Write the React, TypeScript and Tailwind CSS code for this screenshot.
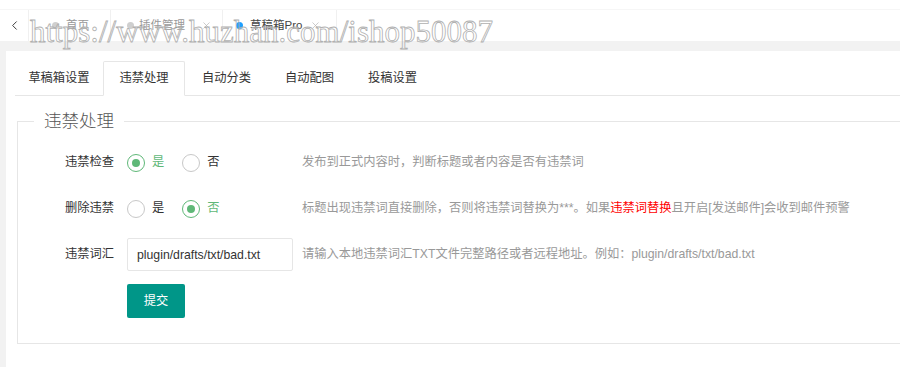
import { ChevronLeft, X } from "lucide-react";

const font = { fontFamily: '"Liberation Sans", "Noto Sans CJK SC", sans-serif' };

function PageTab({
  label,
  dot,
  active,
  width,
  pad,
  gap,
  closeGap,
}: {
  label: string;
  dot: string;
  active?: boolean;
  width: string;
  pad: string;
  gap: string;
  closeGap?: string;
}) {
  return (
    <div className={`flex h-full shrink-0 items-center border-r border-[#f0f0f0] ${width} ${pad}`}>
      <span className={`h-[7px] w-[7px] rounded-full ${dot} ${gap}`} />
      <span className={active ? "text-[#444]" : "text-[#999]"}>{label}</span>
      {closeGap ? <X size={11} strokeWidth={1.5} className={`text-[#b5b5b5] ${closeGap}`} /> : null}
    </div>
  );
}

function Radio({ checked, label }: { checked?: boolean; label: string }) {
  return (
    <div className="mr-[18px] flex items-center">
      <span
        className={`grid h-[18px] w-[18px] place-items-center rounded-full border-[1.5px] ${
          checked ? "border-[#5FB878]" : "border-[#c8c8c8]"
        }`}
      >
        {checked ? <span className="h-[8px] w-[8px] rounded-full bg-[#5FB878]" /> : null}
      </span>
      <span className={`ml-[7px] ${checked ? "text-[#5FB878]" : "text-[#333]"}`}>{label}</span>
    </div>
  );
}

function Row({ label, children, help }: { label: string; children: React.ReactNode; help?: React.ReactNode }) {
  return (
    <div className="flex h-[33px] items-center">
      <div className="w-[109px] pr-[13px] text-right text-[#333]">{label}</div>
      <div className="mr-[9px] flex h-full w-[166px] items-center">{children}</div>
      {help ? <div className="text-[#999]">{help}</div> : null}
    </div>
  );
}

export default function App() {
  return (
    <div className="relative h-[367px] w-[900px] overflow-hidden bg-[#f2f2f2] text-[12.25px]" style={font}>
      {/* page tabs */}
      <div className="h-[10px] border-b border-[#f6f6f6] bg-white" />
      <div className="flex h-[31px] items-center bg-white text-[11.5px]">
        <div className="flex h-full w-[29px] shrink-0 items-center justify-center border-r border-[#f0f0f0]">
          <ChevronLeft size={15} strokeWidth={1.5} className="text-[#333]" />
        </div>
        <PageTab label="首页" dot="bg-[#cfcfcf]" width="w-[82px]" pad="pl-[23px]" gap="mr-[7px]" />
        <PageTab
          label="插件管理"
          dot="bg-[#cfcfcf]"
          width="w-[112px]"
          pad="pl-[16px]"
          gap="mr-[5px]"
          closeGap="ml-[16px]"
        />
        <PageTab
          label="草稿箱Pro"
          dot="bg-[#1E9FFF]"
          active
          width="w-[114px]"
          pad="pl-[13px]"
          gap="mr-[7px]"
          closeGap="ml-[8px]"
        />
      </div>

      {/* watermark */}
      <div
        className="pointer-events-none absolute left-[30px] top-[16px] whitespace-nowrap text-[31px] leading-none text-transparent [-webkit-text-stroke:0.8px_#b0b0b0]"
        style={{ fontFamily: '"Liberation Serif", serif' }}
      >
        https://www.huzhan.com/ishop50087
      </div>

      {/* card */}
      <div className="ml-[6px] mr-[-40px] mt-[10px] h-[400px] bg-white pt-[10px]">
        <div className="ml-[9px] flex h-[35px] border-b border-[#e6e6e6] text-[#333]">
          <div className="flex w-[88px] items-center justify-center">草稿箱设置</div>
          <div className="-mb-px flex w-[82px] items-center justify-center rounded-t-[2px] border border-b-white border-[#e6e6e6] bg-white">
            违禁处理
          </div>
          <div className="flex w-[83px] items-center justify-center">自动分类</div>
          <div className="flex w-[83px] items-center justify-center">自动配图</div>
          <div className="flex w-[83px] items-center justify-center">投稿设置</div>
        </div>

        <fieldset className="ml-[11px] mt-[15px] border border-[#e6e6e6] pb-[25px]">
          <legend className="ml-[16px] px-[10px] text-[17.5px] font-light leading-[20px] text-[#555]">违禁处理</legend>
          <div className="mt-[15px] flex flex-col gap-[13px]">
            <Row label="违禁检查" help="发布到正式内容时，判断标题或者内容是否有违禁词">
              <Radio checked label="是" />
              <Radio label="否" />
            </Row>
            <Row
              label="删除违禁"
              help={
                <>
                  标题出现违禁词直接删除，否则将违禁词替换为***。如果<span className="text-[#ff0000]">违禁词替换</span>
                  且开启[发送邮件]会收到邮件预警
                </>
              }
            >
              <Radio label="是" />
              <Radio checked label="否" />
            </Row>
            <Row label="违禁词汇" help="请输入本地违禁词汇TXT文件完整路径或者远程地址。例如：plugin/drafts/txt/bad.txt">
              <input
                readOnly
                value="plugin/drafts/txt/bad.txt"
                className="h-full w-full rounded-[2px] border border-[#e6e6e6] px-[9px] text-[#333] outline-none"
              />
            </Row>
            <div className="flex">
              <div className="w-[109px]" />
              <button className="h-[34px] w-[58px] rounded-[2px] bg-[#009688] text-white">提交</button>
            </div>
          </div>
        </fieldset>
      </div>
    </div>
  );
}
